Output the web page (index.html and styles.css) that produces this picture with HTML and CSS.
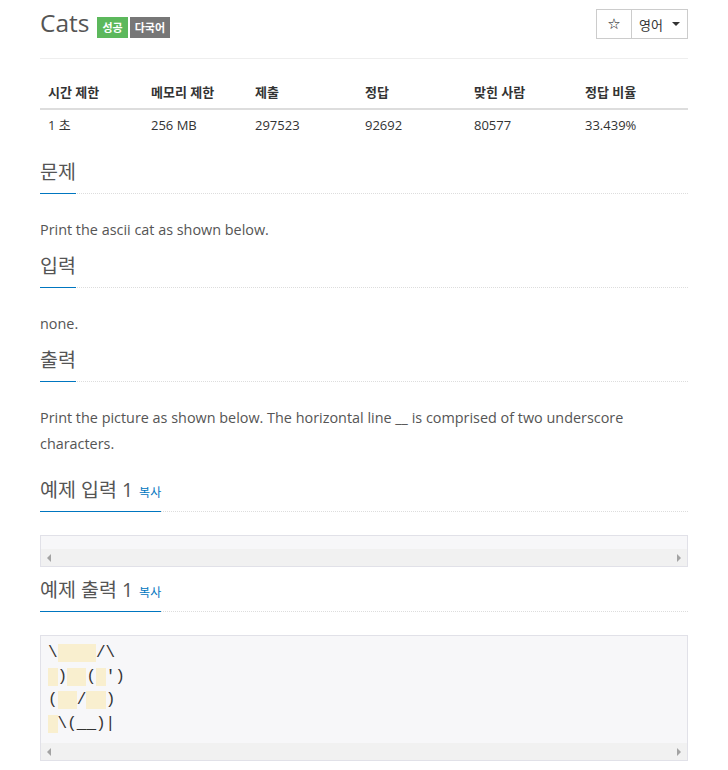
FILE: index.html
```html
<!DOCTYPE html>
<html lang="ko">
<head>
  <meta charset="UTF-8" />
  <title>Cats</title>
  <link rel="stylesheet" href="styles.css">
</head>
<body>
  <div class="container">
    <div class="page-header">
      <h1>
        <span class="title">Cats</span>
        <span class="label label-success">성공</span>
        <span class="label label-default">다국어</span>
      </h1>
      <div class="btn-group">
        <button class="btn btn-star">&#9734;</button>
        <button class="btn btn-lang">영어 <span class="caret"></span></button>
      </div>
    </div>

    <table class="info">
      <thead>
        <tr>
          <th class="c1">시간 제한</th>
          <th class="c2">메모리 제한</th>
          <th class="c3">제출</th>
          <th class="c4">정답</th>
          <th class="c5">맞힌 사람</th>
          <th>정답 비율</th>
        </tr>
      </thead>
      <tbody>
        <tr>
          <td>1 초</td>
          <td>256 MB</td>
          <td>297523</td>
          <td>92692</td>
          <td>80577</td>
          <td>33.439%</td>
        </tr>
      </tbody>
    </table>

    <section class="problem-section first">
      <div class="headline"><h2>문제</h2></div>
      <div class="problem-text"><p>Print the ascii cat as shown below.</p></div>
    </section>

    <section class="problem-section">
      <div class="headline"><h2>입력</h2></div>
      <div class="problem-text"><p>none.</p></div>
    </section>

    <section class="problem-section">
      <div class="headline"><h2>출력</h2></div>
      <div class="problem-text"><p>Print the picture as shown below. The horizontal line __ is comprised of two underscore characters.</p></div>
    </section>

    <section class="problem-section sample first-sample">
      <div class="headline"><h2>예제 입력 1 <a class="copy" href="#">복사</a></h2></div>
      <div class="sampledata">
        <pre class="empty"></pre>
        <div class="hscroll"><span class="arr left"></span><span class="arr right"></span></div>
      </div>
    </section>

    <section class="problem-section sample">
      <div class="headline"><h2>예제 출력 1 <a class="copy" href="#">복사</a></h2></div>
      <div class="sampledata">
<pre>\<span class="sp">    </span>/\
<span class="sp"> </span>)<span class="sp">  </span>(<span class="sp"> </span>')
(<span class="sp">  </span>/<span class="sp">  </span>)
<span class="sp"> </span>\(__)|</pre>
        <div class="hscroll"><span class="arr left"></span><span class="arr right"></span></div>
      </div>
    </section>
  </div>
</body>
</html>
```

FILE: styles.css
```css
body {
  margin: 0;
  font-family: "Open Sans", "Noto Sans CJK KR", sans-serif;
  font-size: 14px;
  color: #333;
  background: #fff;
}

.container {
  padding: 0 40px;
}

.page-header {
  display: flex;
  justify-content: space-between;
  align-items: flex-start;
  height: 58px;
  border-bottom: 1px solid #eee;
}

.page-header h1 {
  margin: 0;
  padding-top: 9px;
  display: flex;
  align-items: baseline;
  font-weight: normal;
  line-height: 28px;
}

.title {
  font-size: 24.5px;
  color: #555;
  margin-right: 8px;
}

.label {
  display: inline-block;
  font-size: 11px;
  font-weight: bold;
  line-height: 13px;
  padding: 4px 5px;
  color: #fff;
  margin-right: 2px;
}

.label-success {
  background-color: #5cb85c;
}

.label-default {
  background-color: #777;
}

.btn-group {
  display: flex;
  margin-top: 9px;
}

.btn {
  height: 30px;
  border: 1px solid #ccc;
  background: #fff;
  color: #333;
  font-family: "Open Sans", "Noto Sans CJK KR", sans-serif;
  font-size: 13px;
  padding: 0 7px;
  display: flex;
  align-items: center;
  white-space: nowrap;
  cursor: pointer;
}

.btn-star {
  width: 36px;
  justify-content: center;
  font-family: "DejaVu Sans", sans-serif;
  font-size: 15px;
  color: #000;
}

.btn-lang {
  width: 57px;
  margin-left: -1px;
  gap: 9px;
}

.caret {
  display: inline-block;
  width: 0;
  height: 0;
  border-top: 4px solid #333;
  border-left: 4px solid transparent;
  border-right: 4px solid transparent;
}

.info {
  width: 100%;
  margin-top: 17px;
  border-collapse: collapse;
  font-size: 13px;
}

.info th,
.info td {
  text-align: left;
  padding: 7px 8px;
  line-height: 18px;
}

.info td {
  padding: 6px 8px 8px;
}

.info th {
  border-bottom: 2px solid #ddd;
}

.info .c1 { width: 87px; }
.info .c2 { width: 88px; }
.info .c3 { width: 94px; }
.info .c4 { width: 93px; }
.info .c5 { width: 95px; }

.problem-section {
  margin-top: 10px;
}

.problem-section.first {
  margin-top: 17px;
}

.problem-section.first-sample {
  margin-top: 20px;
}

.headline {
  border-bottom: 1px dotted #ddd;
}

.headline h2 {
  display: inline-block;
  margin: 0 0 -1px;
  padding-bottom: 8px;
  font-size: 19.5px;
  font-weight: normal;
  line-height: 26px;
  color: #555;
  border-bottom: 1px solid #0076c0;
}

.copy {
  font-size: 12px;
  line-height: 1;
  color: #0076c0;
  text-decoration: none;
  margin-left: 1px;
}

.problem-text {
  margin-top: 23px;
  color: #555;
  font-size: 14.4px;
}

.problem-text p {
  margin: 0;
  line-height: 26px;
}

.sampledata {
  margin-top: 23px;
  border: 1px solid #e1e1e8;
  background: #f7f7f9;
}

.sampledata pre {
  margin: 0;
  padding: 6px 7px 7px;
  font-family: "Liberation Mono", monospace;
  font-size: 16px;
  line-height: 23.6px;
  color: #333;
}

.sampledata pre.empty {
  height: 0;
  padding: 7px 7px 6px;
}

.sp {
  background: #f9efcf;
}

.hscroll {
  height: 17px;
  background: #f1f1f1;
  display: flex;
  justify-content: space-between;
  align-items: center;
  padding: 0 6px;
}

.arr {
  width: 0;
  height: 0;
  border-top: 4px solid transparent;
  border-bottom: 4px solid transparent;
}

.arr.left {
  border-right: 4px solid #a3a3a3;
}

.arr.right {
  border-left: 4px solid #a3a3a3;
}
```
